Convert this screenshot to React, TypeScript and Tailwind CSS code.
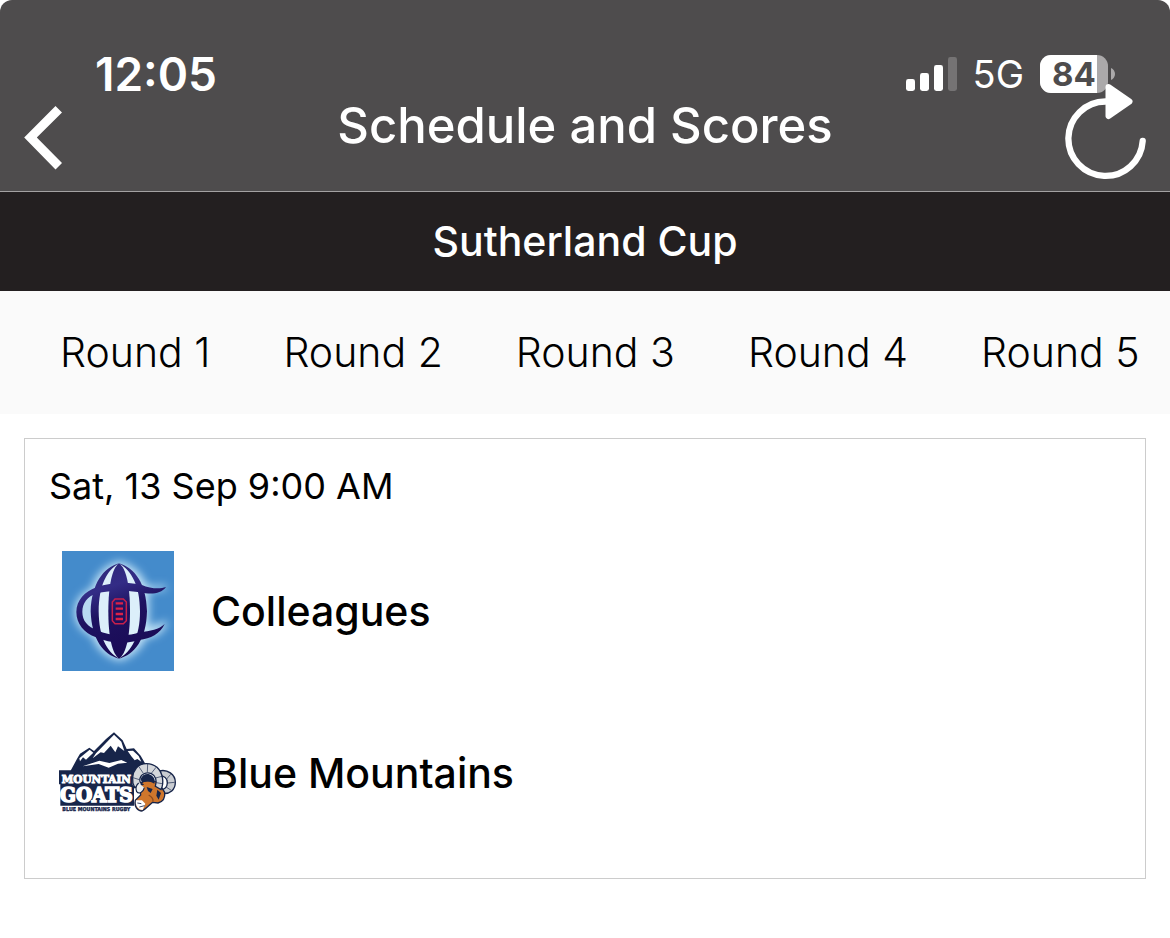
import { useState } from "react"

const rounds = ["Round 1", "Round 2", "Round 3", "Round 4", "Round 5"]

// signal strength, last bar is off
const Signal = () => (
	<svg viewBox="0 0 51 34" className="h-[34px] w-[51px]" aria-hidden="true">
		<rect x="0" y="22" width="9" height="12" rx="2.4" fill="#fff" />
		<rect x="14" y="16" width="9" height="18" rx="2.4" fill="#fff" />
		<rect x="28" y="8" width="9" height="26" rx="2.4" fill="#fff" />
		<rect x="42" y="0" width="9" height="34" rx="2.4" fill="#757374" />
	</svg>
)

const Battery = ({ level }: { level: number }) => (
	<div className="flex items-center gap-[3px]">
		<div className="relative flex h-[38px] w-[68px] items-center justify-center rounded-[11px] bg-[#aba9aa]">
			<div className="absolute inset-y-0 left-0 rounded-l-[11px] bg-white" style={{ width: `${level}%` }} />
			<span className="relative text-[33px] leading-[38px] font-bold text-[#4e4c4d]">{level}</span>
		</div>
		<svg viewBox="0 0 4 12" className="h-3 w-1" aria-hidden="true">
			<path d="M0 0C2.600 1.200 4 3.400 4 6S2.600 10.800 0 12Z" fill="#aba9aa" />
		</svg>
	</div>
)

const BackIcon = () => (
	<svg viewBox="0 0 38 64" className="h-16 w-[38px]" aria-hidden="true">
		<path d="M31.500 0L38 6.500L12.800 31.500L38 57L31.500 63.500L.2 31.500Z" fill="#fff" />
	</svg>
)

const RefreshIcon = () => (
	<svg viewBox="0 0 82 96" className="h-24 w-[82px]" aria-hidden="true">
		<path d="M41.500 17.500A37.200 37.200 0 1 0 78.700 57" fill="none" stroke="#fff" strokeWidth="6.300" strokeLinecap="round" />
		<path d="M44.500 3L65.500 17.500L44.500 32Z" fill="#fff" stroke="#fff" strokeWidth="6" strokeLinejoin="round" />
	</svg>
)

const ColleaguesLogo = () => (
	<svg viewBox="36 33 336 360" className="h-[120px] w-[112px]" role="img" aria-label="Colleagues logo">
		<defs>
			<filter id="glow" x="-20%" y="-20%" width="140%" height="140%">
				<feGaussianBlur stdDeviation="13" />
			</filter>
			<linearGradient id="ball" gradientUnits="userSpaceOnUse" x1="150" y1="70" x2="250" y2="356">
				<stop offset="0" stopColor="#2c2878" />
				<stop offset="0.250" stopColor="#332c86" />
				<stop offset="0.500" stopColor="#1e1260" />
				<stop offset="1" stopColor="#190a54" />
			</linearGradient>
		</defs>
		<rect x="36" y="33" width="336" height="360" fill="#448bcb" />
		<path
			d="M208 70C165 82 138 115 130 150C98 162 80 188 80 216C80 246 100 272 132 284C142 318 168 346 208 356C246 346 272 318 284 288C312 286 334 272 344 252L290 268V148L348 142C330 146 306 146 284 140C272 106 246 80 208 70Z"
			filter="url(#glow)"
			fill="#c4e4f7"
			stroke="#c4e4f7"
			strokeWidth="12"
		/>
		<path d="M208 72C160 86 131 130 126 214C131 296 160 342 208 355C256 342 285 296 290 214C285 130 256 86 208 72Z" fill="#dceffa" />
		<path d="M126 160C104 172 97 194 97 215C97 240 106 256 126 268Z" fill="#b9daf1" />
		<g fill="url(#ball)">
			<path d="M207 70C186 84 175 140 175 214C175 288 186 342 207 356C229 342 240 288 240 214C240 140 229 84 207 70Z" />
			<path d="M207 70C160 84 125 130 122 214C125 298 160 344 207 356C169 334 147 290 146 214C147 138 169 92 207 70Z" />
			<path d="M207 70C254 84 289 130 291 214C289 298 254 344 207 356C245 334 270 290 270 214C270 138 245 92 207 70Z" />
			<path d="M348 141C332 163 302 164 270 157C228 149 176 151 140 160C112 170 97 190 97 216C97 242 112 260 142 271C180 290 236 290 270 276C300 274 328 268 344 252C330 282 302 296 268 300C224 314 176 310 138 292C102 280 79 250 79 216C79 182 104 154 140 142C180 128 232 126 274 134C304 147 330 147 348 141Z" />
		</g>
		<path d="M195 177H220L229 186V242L220 251H195L187 242V186Z" fill="none" stroke="#c8204b" strokeWidth="4.500" />
		<path d="M197 190H219M197 206H219M197 222H219M197 237H219" stroke="#dd2147" strokeWidth="7" />
	</svg>
)

const MountainGoatsLogo = () => (
	<svg viewBox="24 30 360 252" className="h-[84px] w-[120px]" role="img" aria-label="Mountain Goats logo">
		{/* peaks */}
		<path d="M58 156L82 112L90 98L118 80L132 90L168 54L192 34L218 58L230 84L252 82L272 104L288 132L262 172H58Z" fill="#17254a" />
		<path d="M88 112L119 86L130 95L108 116L99 109L90 121Z" fill="#fff" />
		<path d="M138 97L192 41L214 62L223 90L204 76L196 94L182 74L162 96L152 94L128 112Z" fill="#fff" />
		<path d="M233 90L249 89L266 105L274 122L262 114L254 118L244 106Z" fill="#fff" />
		<path d="M98 136L148 119L178 126L214 117L232 125L204 128L176 140L146 129Z" fill="#fff" />
		{/* word plate */}
		<path d="M27 148H248V192L252 196V254H31V190H27Z" fill="#17254a" />
		<g fontWeight="700" textAnchor="middle">
			<g fontFamily="'DejaVu Serif Condensed', 'DejaVu Serif', serif" fill="#fff" stroke="#fff">
				<text x="139" y="185" fontSize="35" strokeWidth="3">MOUNTAIN</text>
				<text x="139" y="242" fontSize="62" strokeWidth="5">GOATS</text>
			</g>
			<text x="139" y="271" fontSize="16" fontFamily="'DejaVu Sans Condensed', 'DejaVu Sans', sans-serif" fill="#17254a" stroke="#17254a" strokeWidth="1">BLUE MOUNTAINS RUGBY</text>
		</g>
		{/* far horn */}
		<path d="M328 150C352 144 376 160 376 184C376 206 360 220 338 217L326 206C342 208 352 200 352 186C352 172 342 164 328 164Z" fill="#c9ccd1" stroke="#17254a" strokeWidth="4" />
		<path d="M362 160L350 174M374 184L353 186M364 208L348 198" stroke="#17254a" strokeWidth="2" />
		{/* head */}
		<path d="M268 190C280 178 306 174 326 186L344 214C346 230 338 242 324 246L308 244C298 252 288 264 276 270C262 270 252 256 256 238L272 222Z" fill="#cf762c" stroke="#17254a" strokeWidth="4" />
		<path d="M258 238L276 238L286 248L278 267C264 267 255 254 258 238Z" fill="#fff" />
		<path d="M262 246L274 248M268 258L284 254" stroke="#17254a" strokeWidth="2.500" />
		<path d="M290 198L308 204L302 216L294 210ZM322 206L333 216L326 236L319 224Z" fill="#17254a" />
		<path d="M296 222C306 228 312 236 308 242" fill="none" stroke="#8e4b1e" strokeWidth="4" />
		{/* near horn */}
		<path d="M254 200C244 182 246 156 259 141C274 124 303 124 321 139C339 156 343 186 333 206L316 196C322 180 317 164 304 158C290 152 274 158 270 172C268 180 270 186 278 190Z" fill="#d5d7db" stroke="#17254a" strokeWidth="4" />
		<path d="M266 136L280 157M293 129L292 153M318 139L304 157M336 166L316 171M336 188L319 185M249 170L268 176" stroke="#17254a" strokeWidth="2" />
		<path d="M272 174C276 160 294 154 306 164C314 170 316 180 313 188C300 180 286 180 276 186Z" fill="#17254a" />
		<path d="M266 186C259 192 256 202 260 212C267 221 280 213 283 200" fill="#eceef0" stroke="#17254a" strokeWidth="3.500" />
	</svg>
)

const teams = [
	{ name: "Colleagues", logo: <ColleaguesLogo /> },
	{ name: "Blue Mountains", logo: <MountainGoatsLogo /> },
]

export default function App() {
	const [round, setRound] = useState<string>("Round 1")

	return (
		<div className="min-h-screen bg-white font-['Inter',sans-serif] text-black">
			<header className="rounded-t-xl border-b border-[#a3a1a2] bg-[#4e4c4d] pt-[47px] text-white">
				<div className="flex h-[54px] items-center justify-between pr-[55px] pl-[95px]">
					<span className="text-[46px] leading-[54px] font-semibold">12:05</span>
					<div className="flex items-center">
						<Signal />
						<span className="mx-4 text-[38px] leading-[54px]">5G</span>
						<Battery level={84} />
					</div>
				</div>
				{/* the refresh arrow runs up over the battery */}
				<div className="relative -mt-[17px] grid h-[107px] grid-cols-[1fr_auto_1fr] items-start px-6">
					<button type="button" aria-label="Back" className="mt-[22px] justify-self-start">
						<BackIcon />
					</button>
					<h1 className="mt-3 text-[49px] leading-[60px] font-medium">Schedule and Scores</h1>
					<button type="button" aria-label="Refresh" className="justify-self-end">
						<RefreshIcon />
					</button>
				</div>
			</header>

			<h2 className="bg-[#231f20] py-5 text-center text-[41px] leading-[59px] font-medium text-white">Sutherland Cup</h2>

			<nav className="flex gap-px overflow-hidden bg-[#fafafa] px-6">
				{rounds.map((name) => (
					<button
						key={name}
						type="button"
						aria-pressed={round === name}
						onClick={() => setRound(name)}
						className="shrink-0 px-9 py-8 text-[41px] leading-[59px] font-light"
					>
						{name}
					</button>
				))}
			</nav>

			<main className="p-6">
				<article className="border border-[#cccccc] px-6 pt-[23px] pb-6">
					<p className="text-[36px] leading-[48px]">Sat, 13 Sep 9:00 AM</p>
					<ul className="mt-5">
						{teams.map((team) => (
							<li key={team.name} className="flex items-center gap-[33px] py-[21px] pl-[9px]">
								<div className="flex h-[120px] w-[120px] items-center justify-center">{team.logo}</div>
								<span className="text-[41px] leading-[59px] font-medium">{team.name}</span>
							</li>
						))}
					</ul>
				</article>
			</main>
		</div>
	)
}
